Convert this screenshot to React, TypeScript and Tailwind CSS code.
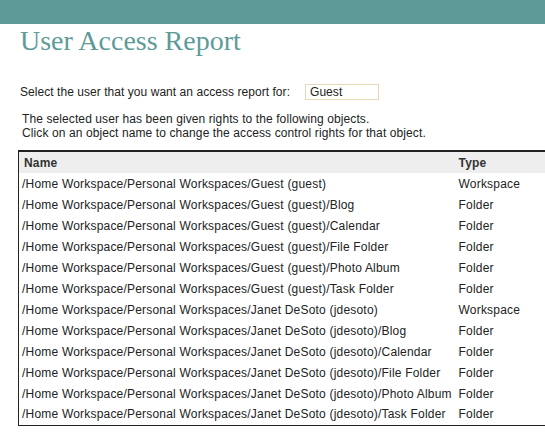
const rows: [string, string][] = [
  ["/Home Workspace/Personal Workspaces/Guest (guest)", "Workspace"],
  ["/Home Workspace/Personal Workspaces/Guest (guest)/Blog", "Folder"],
  ["/Home Workspace/Personal Workspaces/Guest (guest)/Calendar", "Folder"],
  ["/Home Workspace/Personal Workspaces/Guest (guest)/File Folder", "Folder"],
  ["/Home Workspace/Personal Workspaces/Guest (guest)/Photo Album", "Folder"],
  ["/Home Workspace/Personal Workspaces/Guest (guest)/Task Folder", "Folder"],
  ["/Home Workspace/Personal Workspaces/Janet DeSoto (jdesoto)", "Workspace"],
  ["/Home Workspace/Personal Workspaces/Janet DeSoto (jdesoto)/Blog", "Folder"],
  ["/Home Workspace/Personal Workspaces/Janet DeSoto (jdesoto)/Calendar", "Folder"],
  ["/Home Workspace/Personal Workspaces/Janet DeSoto (jdesoto)/File Folder", "Folder"],
  ["/Home Workspace/Personal Workspaces/Janet DeSoto (jdesoto)/Photo Album", "Folder"],
  ["/Home Workspace/Personal Workspaces/Janet DeSoto (jdesoto)/Task Folder", "Folder"],
];

export default function App() {
  return (
    <div className="w-[545px] h-[439px] overflow-hidden bg-white font-['Liberation_Sans',Arial,sans-serif] text-[12px] text-[#222]">
      <div className="h-[24px] bg-[#5e9b98]" />
      <h1 className="ml-[20px] mt-[1px] font-['Liberation_Serif','Times_New_Roman',serif] text-[28px] leading-[32px] text-[#5e9b98]">
        User Access Report
      </h1>

      <div className="mt-[26px] ml-[20px] flex items-center tracking-[0.05px]">
        <span className="w-[285px]">Select the user that you want an access report for:</span>
        <div className="w-[74px] h-[16px] border border-[#e6d9b8] pl-[4px] leading-[14px]">Guest</div>
      </div>

      <div className="mt-[11px] ml-[22px] leading-[14px] tracking-[0.1px]">
        <p>The selected user has been given rights to the following objects.</p>
        <p>Click on an object name to change the access control rights for that object.</p>
      </div>

      <table className="mt-[10px] ml-[18px] w-[560px] border-collapse border border-[#222] border-t-2 tracking-[0.2px]">
        <thead>
          <tr className="h-[22px] bg-[#eeeeee] text-left text-[#333]">
            <th className="pl-[5px] font-bold w-[440px]">Name</th>
            <th className="font-bold">Type</th>
          </tr>
        </thead>
        <tbody>
          {rows.map(([name, type]) => (
            <tr key={name} className="h-[21px]">
              <td className="pl-[3px] whitespace-nowrap">{name}</td>
              <td className="whitespace-nowrap">{type}</td>
            </tr>
          ))}
        </tbody>
      </table>
    </div>
  );
}
